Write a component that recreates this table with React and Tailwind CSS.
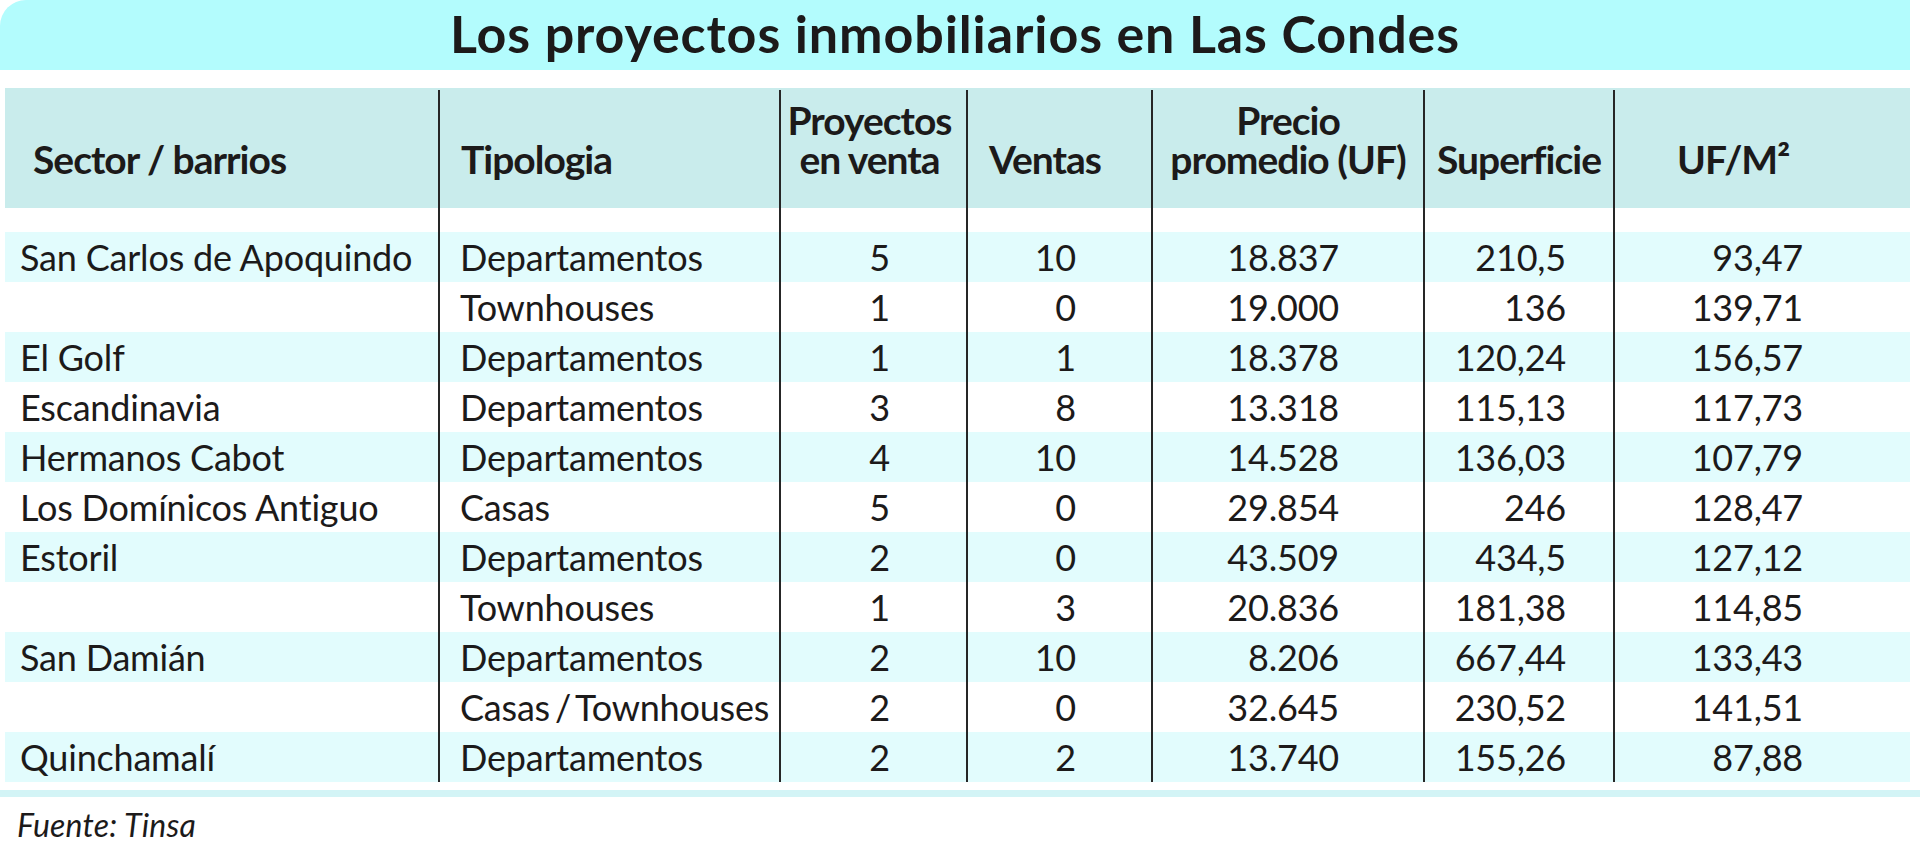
import React from "react";

const rows = [
  ["San Carlos de Apoquindo", "Departamentos", "5", "10", "18.837", "210,5", "93,47"],
  ["", "Townhouses", "1", "0", "19.000", "136", "139,71"],
  ["El Golf", "Departamentos", "1", "1", "18.378", "120,24", "156,57"],
  ["Escandinavia", "Departamentos", "3", "8", "13.318", "115,13", "117,73"],
  ["Hermanos Cabot", "Departamentos", "4", "10", "14.528", "136,03", "107,79"],
  ["Los Domínicos Antiguo", "Casas", "5", "0", "29.854", "246", "128,47"],
  ["Estoril", "Departamentos", "2", "0", "43.509", "434,5", "127,12"],
  ["", "Townhouses", "1", "3", "20.836", "181,38", "114,85"],
  ["San Damián", "Departamentos", "2", "10", "8.206", "667,44", "133,43"],
  ["", "Casas / Townhouses", "2", "0", "32.645", "230,52", "141,51"],
  ["Quinchamalí", "Departamentos", "2", "2", "13.740", "155,26", "87,88"],
];

const gridCols =
  "grid grid-cols-[433px_341px_187px_185px_272px_190px_297px]";
const div = "border-l-2 border-[#262626]";

function HeaderRow() {
  return (
    <div className={`${gridCols} h-[120px] bg-[#c9ecec] text-[39px] leading-[39px] font-bold tracking-[-1px] text-[#1c1a1a]`}>
      <div className="flex items-end pb-[29px] pl-[28px]">Sector / barrios</div>
      <div className={`${div} flex items-end pb-[29px] pl-[21px] mt-[2px]`}>Tipologia</div>
      <div className={`${div} flex items-end justify-center pb-[29px] text-center mt-[2px] pr-[8px]`}>
        <span>
          Proyectos
          <br />
          en venta
        </span>
      </div>
      <div className={`${div} flex items-end pb-[29px] pl-[21px] mt-[2px]`}>Ventas</div>
      <div className={`${div} flex items-end justify-center pb-[29px] text-center mt-[2px]`}>
        <span>
          Precio
          <br />
          promedio (UF)
        </span>
      </div>
      <div className={`${div} flex items-end justify-center pb-[29px] mt-[2px]`}>Superficie</div>
      <div className={`${div} flex items-end pb-[29px] pl-[62px] mt-[2px]`}>UF/M²</div>
    </div>
  );
}

function SpacerRow() {
  return (
    <div className={`${gridCols} h-[24px] bg-white`}>
      <div />
      <div className={div} />
      <div className={div} />
      <div className={div} />
      <div className={div} />
      <div className={div} />
      <div className={div} />
    </div>
  );
}

function DataRow({ r, odd }) {
  return (
    <div
      className={`${gridCols} h-[50px] leading-[50px] text-[36px] tracking-[-0.2px] text-[#1c1a1a] ${
        odd ? "bg-[#e2fcfd]" : "bg-white"
      }`}
    >
      <div className="pl-[15px] whitespace-nowrap">{r[0]}</div>
      <div className={`${div} pl-[20px] whitespace-nowrap [word-spacing:-4px]`}>{r[1]}</div>
      <div className={`${div} pr-[76px] text-right`}>{r[2]}</div>
      <div className={`${div} pr-[75px] text-right`}>{r[3]}</div>
      <div className={`${div} pr-[84px] text-right`}>{r[4]}</div>
      <div className={`${div} pr-[47px] text-right`}>{r[5]}</div>
      <div className={`${div} pr-[107px] text-right`}>{r[6]}</div>
    </div>
  );
}

export default function App() {
  return (
    <div className="w-[1920px] h-[849px] bg-white font-[Lato,'Liberation_Sans',sans-serif] overflow-hidden">
      <div className="w-[1910px] h-[70px] bg-[#b3fcfd] rounded-tl-[26px] flex items-center justify-center">
        <span className="text-[52px] leading-[62px] font-bold tracking-[0.9px] text-[#1c1a1a] -mt-[4px] whitespace-nowrap">
          Los proyectos inmobiliarios en Las Condes
        </span>
      </div>
      <div className="mt-[18px] ml-[5px] w-[1905px]">
        <HeaderRow />
        <SpacerRow />
        {rows.map((r, i) => (
          <DataRow key={i} r={r} odd={i % 2 === 0} />
        ))}
      </div>
      <div className="mt-[8px] h-[7px] w-full bg-[#d3f4f6]" />
      <div className="mt-[12px] pl-[17px] text-[32px] leading-[32px] italic tracking-[0.2px] text-[#1c1a1a]">
        Fuente: Tinsa
      </div>
    </div>
  );
}
